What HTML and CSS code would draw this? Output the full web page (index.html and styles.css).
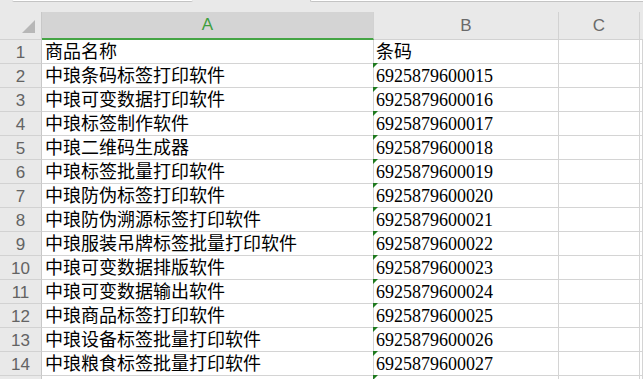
FILE: index.html
```html
<!DOCTYPE html>
<html lang="zh-CN">
<head>
<meta charset="utf-8">
<title>Sheet</title>
<link rel="stylesheet" href="styles.css">
</head>
<body>
<div class="topbar">
  <div class="namebox"></div>
  <div class="fxbox"></div>
</div>
<div class="sheet">
  <div class="hd corner"><span class="tri"></span></div>
  <div class="hd col sel">A</div>
  <div class="hd col">B</div>
  <div class="hd col">C</div>
  <div class="hd col last"></div>

  <div class="rn">1</div><div class="c a">商品名称</div><div class="c b">条码</div><div class="c"></div><div class="c"></div>
  <div class="rn">2</div><div class="c a">中琅条码标签打印软件</div><div class="c b t">6925879600015</div><div class="c"></div><div class="c"></div>
  <div class="rn">3</div><div class="c a">中琅可变数据打印软件</div><div class="c b t">6925879600016</div><div class="c"></div><div class="c"></div>
  <div class="rn">4</div><div class="c a">中琅标签制作软件</div><div class="c b t">6925879600017</div><div class="c"></div><div class="c"></div>
  <div class="rn">5</div><div class="c a">中琅二维码生成器</div><div class="c b t">6925879600018</div><div class="c"></div><div class="c"></div>
  <div class="rn">6</div><div class="c a">中琅标签批量打印软件</div><div class="c b t">6925879600019</div><div class="c"></div><div class="c"></div>
  <div class="rn">7</div><div class="c a">中琅防伪标签打印软件</div><div class="c b t">6925879600020</div><div class="c"></div><div class="c"></div>
  <div class="rn">8</div><div class="c a">中琅防伪溯源标签打印软件</div><div class="c b t">6925879600021</div><div class="c"></div><div class="c"></div>
  <div class="rn">9</div><div class="c a">中琅服装吊牌标签批量打印软件</div><div class="c b t">6925879600022</div><div class="c"></div><div class="c"></div>
  <div class="rn">10</div><div class="c a">中琅可变数据排版软件</div><div class="c b t">6925879600023</div><div class="c"></div><div class="c"></div>
  <div class="rn">11</div><div class="c a">中琅可变数据输出软件</div><div class="c b t">6925879600024</div><div class="c"></div><div class="c"></div>
  <div class="rn">12</div><div class="c a">中琅商品标签打印软件</div><div class="c b t">6925879600025</div><div class="c"></div><div class="c"></div>
  <div class="rn">13</div><div class="c a">中琅设备标签批量打印软件</div><div class="c b t">6925879600026</div><div class="c"></div><div class="c"></div>
  <div class="rn">14</div><div class="c a">中琅粮食标签批量打印软件</div><div class="c b t">6925879600027</div><div class="c"></div><div class="c"></div>
  <div class="rn"></div><div class="c a"></div><div class="c b t"></div><div class="c"></div><div class="c"></div>
</div>
</body>
</html>
```
FILE: styles.css
```css
html, body {
  margin: 0;
  padding: 0;
  background: #ffffff;
  overflow: hidden;
}
body {
  width: 643px;
  height: 379px;
}
.topbar {
  display: flex;
  height: 12px;
  background: #e9e9e9;
}
.namebox {
  margin-left: 12px;
  width: 181px;
  height: 1px;
  background: #ffffff;
  border-bottom: 1px solid #c4c4c4;
  border-radius: 0 0 3px 3px;
}
.fxbox {
  margin-left: 117px;
  flex: 1;
  height: 1px;
  background: #ffffff;
  border-bottom: 1px solid #c4c4c4;
  border-left: 1px solid #c4c4c4;
  border-radius: 0 0 0 3px;
}
.sheet {
  display: grid;
  grid-template-columns: 42px 332px 185px 81px 1fr;
  grid-template-rows: 28px repeat(15, 24px);
}
.sheet > div {
  box-sizing: border-box;
}
.hd {
  background: #e9e9e9;
  border-right: 1px solid #d2d2d2;
  border-bottom: 1px solid #d2d2d2;
  font-family: "Liberation Sans", Arial, sans-serif;
  font-size: 17px;
  color: #6a6a6a;
  display: flex;
  align-items: center;
  justify-content: center;
}
.hd.corner {
  position: relative;
  border-right: 1px solid #c8c8c8;
}
.tri {
  position: absolute;
  left: 22px;
  top: 8px;
  width: 0;
  height: 0;
  border-left: 13px solid transparent;
  border-bottom: 13px solid #b7b7b7;
}
.hd.sel {
  background: #d4d4d4;
  color: #3e9f3e;
  border-bottom: 2px solid #44a444;
}
.hd.last {
  border-right: none;
}
.rn {
  background: #e9e9e9;
  border-right: 1px solid #c8c8c8;
  border-bottom: 1px solid #d2d2d2;
  font-family: "Liberation Sans", Arial, sans-serif;
  font-size: 17px;
  color: #636363;
  display: flex;
  align-items: flex-end;
  justify-content: center;
  line-height: 21px;
}
.c {
  border-right: 1px solid #d4d4d4;
  border-bottom: 1px solid #d4d4d4;
  font-family: "Liberation Serif", "Noto Sans CJK SC", serif;
  font-size: 18px;
  color: #000000;
  display: flex;
  align-items: flex-end;
  line-height: 21px;
  white-space: nowrap;
  overflow: visible;
}
.c.a {
  padding-left: 3px;
}
.c.b {
  padding-left: 2px;
  position: relative;
}
.c.t::before {
  content: "";
  position: absolute;
  left: -1px;
  top: -1px;
  width: 0;
  height: 0;
  border-top: 5px solid #1f7a1f;
  border-right: 5px solid transparent;
}
```
